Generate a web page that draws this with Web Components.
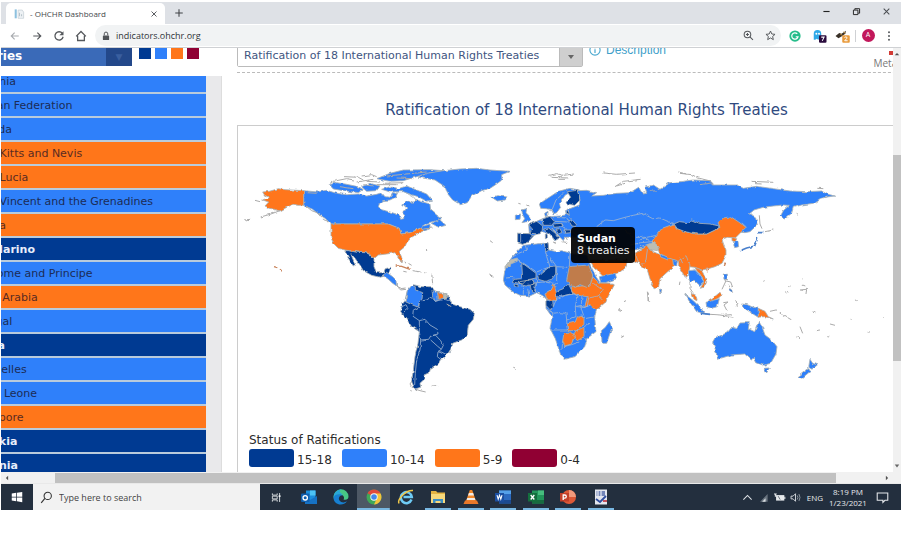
<!DOCTYPE html>
<html lang="en">
<head>
<meta charset="utf-8">
<title>OHCHR Dashboard</title>
<style>
  html, body { height: 100%; }
  body { margin: 0; background: #fff; overflow: hidden; font-family: "DejaVu Sans", Verdana, sans-serif; }
</style>
</head>
<body>
<desktop-screen>
  <tab-strip slot="browser"></tab-strip>
  <nav-toolbar slot="browser"></nav-toolbar>
  <scroll-frame slot="browser">
    <country-list></country-list>
    <treaty-report></treaty-report>
  </scroll-frame>
  <task-bar slot="taskbar"></task-bar>
</desktop-screen>

<script>
const define = (name, html, setup) => {
  const template = document.createElement('template');
  template.innerHTML = html;
  customElements.define(name, class extends HTMLElement {
    constructor() {
      super();
      this.attachShadow({ mode: 'open' }).append(template.content.cloneNode(true));
      if (setup) setup(this);
    }
  });
};

const ICONS = {
  back: '<path d="M13 8H3M7.500 3.500L3 8l4.500 4.500" fill="none" stroke="#a9acb0" stroke-width="1.500"/>',
  forward: '<path d="M3 8h10M8.500 3.500L13 8l-4.500 4.500" fill="none" stroke="#55585c" stroke-width="1.600"/>',
  reload: '<path d="M12.500 4.500A5.500 5.500 0 1 0 13.500 9" fill="none" stroke="#55585c" stroke-width="1.700"/><path d="M14 1.500V7H8.500z" fill="#55585c"/>',
  home: '<path d="M1.500 8.500L8 2l6.500 6.500M3.500 7.500V14h9V7.500" fill="none" stroke="#55585c" stroke-width="1.700"/>',
  lock: '<rect x="3" y="7" width="10" height="7.500" rx="1" fill="#505357"/><path d="M5.200 7V4.500a2.800 2.800 0 0 1 5.600 0V7" fill="none" stroke="#505357" stroke-width="1.600"/>',
  zoom: '<circle cx="6.500" cy="6.500" r="4.800" fill="none" stroke="#55585c" stroke-width="1.500"/><path d="M10 10l4.500 4.500M4.300 6.500h4.400M6.500 4.300v4.400" stroke="#55585c" stroke-width="1.500"/>',
  star: '<path d="M8 1.500l1.900 4.300 4.700.5-3.500 3.100 1 4.600L8 11.600 3.900 14l1-4.600L1.400 6.300l4.700-.5z" fill="none" stroke="#55585c" stroke-width="1.400"/>',
  grammar: '<circle cx="8" cy="8" r="7.500" fill="#27bd8b"/><path d="M11 5.200A4.200 4.200 0 1 0 12 9H9" fill="none" stroke="#fff" stroke-width="1.600"/>',
  ghost: '<path d="M1 13V5a5 5 0 0 1 10 0v8l-2-1.500L7 13l-2-1.500L3 13z" fill="#30a9e8"/><circle cx="4.500" cy="5" r="1.300" fill="#fff"/><circle cx="8" cy="5" r="1.300" fill="#fff"/><rect x="8" y="7" width="10" height="10" rx="1.500" fill="#2a0b3d"/><path d="M11 9.500h3.800l-2.500 5" fill="none" stroke="#fff" stroke-width="1.400"/>',
  wasp: '<path d="M-2 8l5-4 3 1 6-4-1 4-4 3-5 3z" fill="#3a3128"/><path d="M4 5l3 2M9 2l2 3" stroke="#d39a3d" stroke-width="1.200"/><rect x="7" y="7" width="10" height="10" rx="1.500" fill="#e99b3c"/><path d="M10 10q2-1.800 3.400 0 .4 1-3.200 4.300h4" fill="none" stroke="#fff" stroke-width="1.300"/>',
  more: '<circle cx="8" cy="3" r="1.300" fill="#55585c"/><circle cx="8" cy="8" r="1.300" fill="#55585c"/><circle cx="8" cy="13" r="1.300" fill="#55585c"/>',
  close: '<path d="M3 3l10 10M13 3L3 13" stroke="#4a4d51" stroke-width="1.800"/>',
  plus: '<path d="M8 2v12M2 8h12" stroke="#3f4246" stroke-width="1.700"/>',
  min: '<path d="M2.500 8h11" stroke="#222" stroke-width="2"/>',
  restore: '<path d="M2.500 5.500h8v8h-8zM5 5V3h8.500v8H11" fill="none" stroke="#222" stroke-width="1.700"/>',
  page: '<path d="M1 2h3v13H1z" fill="#8dc1df"/><path d="M6 3h6l2 3v9H6z" fill="#eef2f5" stroke="#c2ccd3"/><path d="M8 12V7M11 12V9" stroke="#b6c2ca" stroke-width="1.500"/>',
  windows: '<path d="M1 3.300l6-.9v5.200H1zM8 2.300L15 1.200v6.400H8zM1 8.500h6v5.200l-6-.9zM8 8.500h7v6.400L8 13.800z" fill="#fff"/>',
  search: '<circle cx="9.500" cy="6" r="4.500" fill="none" stroke="#333" stroke-width="1.300"/><path d="M6 9l-4.500 5.500" stroke="#333" stroke-width="1.400"/>',
  tasks: '<path d="M2 2v2.500h7V2M2 14v-2.500h7V14M2 6h7v4H2zM12.500 1.500v13" fill="none" stroke="#d4d8dc" stroke-width="1.400"/><path d="M11 5h3v2h-3z" fill="#fff"/>',
  outlook: '<path d="M5 1.500h9.500V14H5z" fill="#1d8fdc"/><path d="M9 1.500h5.500v5H9z" fill="#4cc3f4"/><path d="M4 8l5 3 7-4v8H4z" fill="#1672c4"/><rect y="4.500" width="8.500" height="8.500" rx="1" fill="#0f5fb0"/><circle cx="4.200" cy="8.800" r="2.200" fill="none" stroke="#fff" stroke-width="1.300"/>',
  edge: '<path d="M.5 8A7.500 7.500 0 0 1 15.500 7.500c0 3-2.500 3.800-5 3 1.500-2-.3-5-3-4.800C4 5.900 1 8 1 10z" fill="#47c985"/><path d="M.5 8C1 3 5 .5 8.500.5 4 3 9 4 10 6 5 4 2 6 .5 8z" fill="#29a6db"/><path d="M.5 8.500C2 4.500 7 4.500 9.500 6.500 6.500 6 5 9 6.500 11.500c1.500 2.300 5 2.500 7.500.8C10 18 .5 16 .5 8.500z" fill="#1780d2"/>',
  chrome: '<circle cx="8" cy="8" r="7.500" fill="#3fa958"/><path d="M8 8L1.500 4.200A7.500 7.500 0 0 1 14.500 4.200z" fill="#e2483c"/><path d="M8 4.500h6.600A7.500 7.500 0 0 1 8 15.500L11 9z" fill="#f5c33b"/><circle cx="8" cy="8" r="3.700" fill="#f4f6f6"/><circle cx="8" cy="8" r="2.800" fill="#4486ed"/>',
  ie: '<path d="M13.500 10.500A5.500 5.500 0 1 1 13.800 8H5.500" fill="none" stroke="#6ecbf5" stroke-width="2.500"/><path d="M1 14.500C-1 11 7 1 15 1.500" fill="none" stroke="#efc94c" stroke-width="1.500"/>',
  folder: '<path d="M1 2h5l1.500 1.500H15V14H1z" fill="#e5b443"/><path d="M1 5h14v9H1z" fill="#f8d97b"/><path d="M3 14v-4h10v4h-2.500v-2h-5v2z" fill="#3e8fc4"/>',
  vlc: '<path d="M6.800 1h2.400L13 12H3z" fill="#f3892c"/><path d="M5.900 4h4.200l.9 2.600H5zM4.300 9h7.400l.7 2H3.600z" fill="#f2eee9"/><path d="M2 11.500h12l1.500 3.500H.5z" fill="#e8782a"/>',
  word: '<path d="M4 1.500h12v13H4z" fill="#2c6ac0"/><path d="M4 1.500h12v3.500H4z" fill="#55a0e8"/><path d="M4 11h12v3.500H4z" fill="#1b4a91"/><path d="M0 4h9v8.500H0z" fill="#1c4fa0"/><path d="M2 6.200l1.200 4 1.300-4 1.300 4 1.200-4" fill="none" stroke="#fff" stroke-width="1.100"/>',
  excel: '<path d="M4 1.500h12v13H4z" fill="#22955a"/><path d="M10 1.500h6V6h-6z" fill="#46bd7e"/><path d="M4 11h12v3.500H4z" fill="#176b40"/><path d="M0 4h9v8.500H0z" fill="#146f3e"/><path d="M2.700 6l3.600 4.500M6.300 6l-3.600 4.500" stroke="#fff" stroke-width="1.300"/>',
  ppt: '<circle cx="9" cy="8" r="7" fill="#dd5937"/><path d="M9 1a7 7 0 0 1 7 7H9z" fill="#f29a7c"/><path d="M0 4h9v8.500H0z" fill="#c2402a"/><path d="M3.200 11V6h1.500a1.600 1.600 0 0 1 0 3.200H3.200" fill="none" stroke="#fff" stroke-width="1.300"/>',
  app: '<path d="M2 .5h12v15H2z" fill="#e3e6ee"/><path d="M3.500 2H12v5H3.500z" fill="#7386b9"/><path d="M5 2v5M8 2v5" stroke="#fff"/><path d="M3 10l4 3 6-6" fill="none" stroke="#2e4d9e" stroke-width="1.800"/><path d="M10 12h4" stroke="#c3505c" stroke-width="2"/>',
  up: '<path d="M2 11l6-6 6 6" fill="none" stroke="#dce0e4" stroke-width="1.600"/>',
  wifi: '<path d="M3 14L14 3v11z" fill="#69747f"/><path d="M6 14l5-5v5z" fill="#dce0e4"/>',
  battery: '<path d="M0 3h4M2 3v4" stroke="#e6e9ec" stroke-width="1.600"/><path d="M3 4.500h12v8H3z" fill="#e6e9ec"/><path d="M15 7h1.500v3H15z" fill="#e6e9ec"/><path d="M6 6l3 5" stroke="#37424e"/>',
  sound: '<path d="M1.500 6h3L8 2.500v11L4.500 10h-3z" fill="none" stroke="#dce0e4" stroke-width="1.300"/><path d="M10.500 5q2 3 0 6M13 3q3 5 0 10" fill="none" stroke="#97a0a9" stroke-width="1.300"/>',
  note: '<path d="M1.500 2.500h13v9H11L8.500 14 8.500 11.500h-7z" fill="none" stroke="#e6e9ec" stroke-width="1.300"/>',
  info: '<circle cx="8" cy="8" r="6.800" fill="none" stroke="#4aa8cf" stroke-width="1.500"/><path d="M8 7v5M8 3.500v2" stroke="#4aa8cf" stroke-width="1.600"/>',
  down: '<path d="M2 4h12L8 12z" fill="#666"/>',
  left: '<path d="M11 2v12L5 8z" fill="#505050"/>',
  right: '<path d="M5 2v12l6-6z" fill="#505050"/>',
  top: '<path d="M2 11h12L8 5z" fill="#505050"/>'
};

class UiIcon extends HTMLElement {
  constructor() { super(); this.attachShadow({ mode: 'open' }); }
  connectedCallback() {
    this.shadowRoot.innerHTML = `<style>
      :host { display: inline-flex; width: var(--icon, 11px); height: var(--icon, 11px); flex: none; }
      svg { width: 100%; height: 100%; overflow: visible; }
    </style><svg viewBox="0 0 16 16" aria-hidden="true">${ICONS[this.getAttribute('name')]}</svg>`;
  }
}
customElements.define('ui-icon', UiIcon);

const BUTTON = `button { border: 0; padding: 0; margin: 0; background: none; display: flex; align-items: center; justify-content: center; font: inherit; color: inherit; }`;

define('desktop-screen', `<style>
  :host { display: flex; flex-direction: column; box-sizing: border-box; height: 100vh; padding: 2px 0 27px 1px; }
  main { flex: 1; min-height: 0; display: flex; flex-direction: column; }
</style><main><slot name="browser"></slot></main><slot name="taskbar"></slot>`);

define('tab-strip', `<style>
  :host { display: flex; flex: none; height: 22px; background: #dee1e6; padding-left: 5px; font: 8px "Open Sans", sans-serif; color: #45484c; }
  ${BUTTON}
  .tab { display: flex; align-items: center; box-sizing: border-box; width: 159px; padding: 0 4px 0 8px; margin-top: 1px; background: #fff; border-radius: 5px 5px 0 0; }
  .tab span { flex: 1; padding-left: 5px; }
  .tab button { width: 14px; --icon: 8px; }
  .add { width: 28px; --icon: 10px; }
  .win { margin-left: auto; display: flex; --icon: 9px; }
  .win button { width: 30px; height: 19px; }
</style>
<div class="tab"><ui-icon name="page"></ui-icon><span>- OHCHR Dashboard</span><button aria-label="Close tab"><ui-icon name="close"></ui-icon></button></div>
<button class="add" aria-label="New tab"><ui-icon name="plus"></ui-icon></button>
<div class="win"><button aria-label="Minimize"><ui-icon name="min"></ui-icon></button><button aria-label="Restore"><ui-icon name="restore"></ui-icon></button><button aria-label="Close"><ui-icon name="close"></ui-icon></button></div>`);

define('nav-toolbar', `<style>
  :host { display: flex; flex: none; align-items: center; box-sizing: border-box; height: 24px; padding: 0 3px; background: #fff; border-bottom: 1px solid #cfd1d4; }
  ${BUTTON}
  button { width: 22px; height: 22px; --icon: 12px; }
  .ext { width: 24px; }
  form { flex: 1; display: flex; align-items: center; height: 21px; margin: 0 2px 0 3px; padding-left: 6px; background: #f1f3f4; border-radius: 11px; }
  form button { --icon: 11px; }
  form ui-icon[name=lock] { --icon: 10px; }
  input { flex: 1; min-width: 0; border: 0; background: none; padding: 0 0 0 5px; outline: 0; font: 9px "Open Sans", sans-serif; color: #303338; }
  i { width: 1px; height: 12px; background: #cfd1d4; }
  b { width: 13px; height: 13px; border-radius: 50%; background: #c2185b; color: #fff; font: 7px/13px Roboto, sans-serif; text-align: center; }
  .more { width: 18px; }
</style>
<button aria-label="Back"><ui-icon name="back"></ui-icon></button>
<button aria-label="Forward"><ui-icon name="forward"></ui-icon></button>
<button aria-label="Reload"><ui-icon name="reload"></ui-icon></button>
<button aria-label="Home"><ui-icon name="home"></ui-icon></button>
<form><ui-icon name="lock"></ui-icon><input aria-label="Address" value="indicators.ohchr.org"><button type="button" aria-label="Zoom"><ui-icon name="zoom"></ui-icon></button><button type="button" aria-label="Bookmark"><ui-icon name="star"></ui-icon></button></form>
<button class="ext" aria-label="Grammar extension"><ui-icon name="grammar"></ui-icon></button>
<button class="ext" aria-label="Privacy extension"><ui-icon name="ghost"></ui-icon></button>
<button class="ext" aria-label="Tracker extension"><ui-icon name="wasp"></ui-icon></button>
<i></i><button class="ext" aria-label="Profile"><b>A</b></button>
<button class="more" aria-label="Menu"><ui-icon name="more"></ui-icon></button>`);

define('scroll-frame', `<style>
  :host { flex: 1; min-height: 0; display: grid; grid-template: minmax(0, 1fr) 11px / minmax(0, 1fr) 8px; background: #f1f1f1; --icon: 6px; }
  .view { display: flex; overflow: hidden; background: #fff; }
  .v, .h { display: flex; align-items: center; justify-content: space-between; }
  .v { flex-direction: column; padding: 3px 0; }
  .h { padding: 0 3px; }
  .h div { flex: 1; height: 10px; padding: 0 48px 0 45px; }
  .v div { flex: 1; width: 8px; padding: 98px 0 102px; }
  span { display: block; height: 100%; background: #c1c1c1; }
</style>
<div class="view"><slot></slot></div>
<div class="v"><ui-icon name="top"></ui-icon><div><span></span></div><ui-icon name="down"></ui-icon></div>
<div class="h"><ui-icon name="left"></ui-icon><div><span></span></div><ui-icon name="right"></ui-icon></div>`);

define('country-list', `<style>
  :host { flex: none; width: 221px; display: flex; flex-direction: column; overflow: hidden; font-size: 11px; }
  header { display: flex; height: 28px; box-sizing: border-box; align-items: flex-start; }
  ${BUTTON}
  button.pick { width: 131px; height: 18px; background: #3a6ab8; justify-content: space-between; overflow: hidden; color: #fff; font: bold 12px "DejaVu Sans", sans-serif; }
  .pick span { margin-left: -44px; padding-bottom: 3px; }
  .pick em { width: 26px; height: 18px; background: #23488a; display: flex; align-items: center; justify-content: center; font: 9px/18px "DejaVu Sans", sans-serif; color: #3a5f9f; }
  .keys { display: flex; gap: 4px; padding-left: 7px; }
  .keys i { width: 12px; height: 11px; }
  .list { flex: 1; min-height: 0; overflow: hidden; background: #e9e9eb; border-right: 1px solid #ddd; }
  ul { list-style: none; margin: -6px 15px 0 0; padding: 0; }
  li { height: 22px; line-height: 23px; border-bottom: 2px solid #b9cbdc; white-space: nowrap; overflow: hidden; color: #1c2c56; }
  li span { margin-left: -33px; }
  .m { background: #2f80fa; } .o { background: #ff761a; color: #5a2b22; } .d { background: #003a92; color: #e8eefb; font-weight: bold; }
  .d span { margin-left: -36px; }
</style>
<header><button class="pick"><span>Countries</span><em>▼</em></button><div class="keys"><i style="background:#003a92"></i><i style="background:#2f80fa"></i><i style="background:#ff761a"></i><i style="background:#900033"></i></div></header>
<div class="list"><ul></ul></div>`, host => {
  const rows = 'm Romania|m Russian Federation|m Rwanda|o Saint Kitts and Nevis|o Saint Lucia|m Saint Vincent and the Grenadines|o Samoa|d San Marino|m Sao Tome and Principe|o Saudi Arabia|m Senegal|d Serbia|m Seychelles|m Sierra Leone|o Singapore|d Slovakia|d Slovenia';
  host.shadowRoot.querySelector('ul').innerHTML = rows.split('|').map(r => `<li class="${r[0]}"><span>${r.slice(2)}</span></li>`).join('');
});

define('treaty-report', `<style>
  :host { flex: 1; min-width: 0; display: flex; flex-direction: column; margin: 0 -43px 0 15px; color: #333; font-size: 11px; }
  header { flex: none; display: flex; align-items: flex-start; height: 24px; border-bottom: 1px dashed #bbb; }
  .combo { display: flex; width: 346px; height: 26px; box-sizing: border-box; margin-top: -7px; border: 1px solid #bbb; border-radius: 2px; }
  select { flex: 1; appearance: none; border: 0; padding: 3px 0 0 6px; background: #fff; font: 11px "DejaVu Sans", sans-serif; color: #41557f; outline: 0; }
  .combo span { width: 22px; display: flex; align-items: center; justify-content: center; padding-top: 5px; background: #cfcfcf; border-left: 1px solid #bbb; --icon: 8px; }
  a { display: flex; align-items: center; gap: 5px; margin: -5px 0 0 6px; font: 12px/14px "Liberation Sans", Arial, sans-serif; color: #3f9fca; text-decoration: none; --icon: 12px; }
  .meta { margin: 0 18px 0 auto; display: flex; flex-direction: column; align-items: flex-start; font: 10px/12px "Open Sans", sans-serif; color: #777; }
  .meta i { width: 4px; height: 4px; margin: 3px 0 2px 16px; background: #d23b35; }
  h1 { flex: none; margin: 0; padding: 27px 0 5px; font: 15px/20px "DejaVu Sans", sans-serif; text-align: center; color: #2f4a80; }
  section { flex: 1; min-height: 0; display: flex; flex-direction: column; border: 1px solid #ccc; border-bottom: 0; }
</style>
<header>
  <div class="combo"><select aria-label="Indicator"><option>Ratification of 18 International Human Rights Treaties</option></select><span><ui-icon name="down"></ui-icon></span></div>
  <a href="#description"><ui-icon name="info"></ui-icon>Description</a>
  <div class="meta"><i></i>Metadata</div>
</header>
<h1>Ratification of 18 International Human Rights Treaties</h1>
<section><world-map><map-tip><b>Sudan</b>8 treaties</map-tip></world-map><map-legend></map-legend></section>`);

define('map-tip', `<style>
  :host { display: block; box-sizing: border-box; padding: 6px; border-radius: 4px; background: rgba(0,0,0,.93); color: #eee; font: 11px/12px "DejaVu Sans", sans-serif; white-space: nowrap; }
  ::slotted(b) { display: block; color: #fff; }
</style><slot></slot>`);

define('map-legend', `<style>
  :host { display: block; flex: none; padding: 0 0 5px 11px; font: 12px/16px "DejaVu Sans", sans-serif; color: #2b2b2b; }
  ul { display: flex; gap: 10px; list-style: none; margin: 1px 0 0; padding: 0; }
  li { display: flex; gap: 3px; align-items: flex-end; line-height: 13px; }
  i { width: 45px; height: 18px; border-radius: 3px; }
</style>Status of Ratifications
<ul><li><i style="background:#003a92"></i>15-18</li><li><i style="background:#2f80fa"></i>10-14</li><li><i style="background:#ff761a"></i>5-9</li><li><i style="background:#900033"></i>0-4</li></ul>`);

define('world-map', `<style>
  :host { position: relative; display: block; flex: 1; min-height: 0; overflow: hidden; }
  svg { display: block; width: 100%; height: 100%; }
  ::slotted(map-tip) { position: absolute; left: 333px; top: 101px; }
  path { stroke: #aab2b6; stroke-width: 2.500; stroke-linejoin: round; }
  .b { fill: #2f80fa; } .o { fill: #ff761a; } .d { fill: #003a92; } .w { fill: #fff; } .g { fill: #bdbdb2; } .s { fill: #c07b4b; }
  .l { fill: none; stroke: #9db4d0; stroke-width: 2.500; } .k { fill: none; stroke: #aaa; stroke-width: 3; }
  .ol { fill: none; stroke: #c9845c; stroke-width: 4; } .bl { fill: none; stroke: #4a80cc; stroke-width: 5; }
</style>
<svg viewBox="238 126 698 306" preserveAspectRatio="xMinYMin slice" role="img" aria-label="World map of treaty ratification">
<defs><filter id="coast" x="0" y="0" width="1" height="1"><feTurbulence type="fractalNoise" baseFrequency=".2" numOctaves="2" seed="4"/><feDisplacementMap in="SourceGraphic" scale="3" xChannelSelector="R" yChannelSelector="G"/></filter></defs>
<g filter="url(#coast)"><path d="M238 126h698v306H238z" fill="#fff" style="stroke:none"/>
<!-- North America and Greenland -->
<g transform="translate(230 150) scale(.3333)">
<path class="b" d="M221 122L262 126 290 121 320 130 350 134 385 132 410 138 440 133 455 128 465 140 480 142 490 128 505 132 560 150 575 155 600 162 602 180 620 195 636 206 612 214 590 220 575 230 600 222 600 236 578 245 575 232 560 240 540 248 513 252 508 235 490 228 475 222 303 222 285 205 262 190 248 178 221 166Z"/>
<path class="w" d="M446 166L455 152 480 150 496 142 505 125 520 122 530 130 550 140 558 150 550 160 530 152 518 162 530 174 522 186 521 206 512 208 508 195 480 186 455 179Z"/>
<path class="b" d="M298 104L320 98 345 102 375 108 400 118 385 128 340 122 310 117ZM455 118L480 110 505 116 530 108 560 120 590 132 606 150 590 154 565 140 545 134 520 125 480 126ZM440 86L480 70 520 60 600 59 640 62 590 72 560 80 520 92 480 94ZM395 110L420 100 450 108 440 122 410 124ZM604 220L628 208 648 226 626 232Z"/>
<path class="k" d="M320 92L350 86 372 90M345 80L385 82 400 90M395 78L425 74 440 80M410 94L450 96M470 78L530 72 590 66M460 100L520 98M500 84L550 86M330 110L370 116M300 100L320 88M380 96L430 88M400 104L430 108M440 104L500 104M230 128L260 130M575 238L608 234"/>
<path class="o" d="M98 126L118 124 145 116 165 119 221 122 221 166 205 166 190 163 172 171 150 183 138 180 118 174 105 168 116 156 98 150 118 142 104 136Z"/>
<path class="k" d="M150 182L120 193 92 201M62 208L42 210M75 151L90 155M228 168L245 182 262 188 275 204 292 216"/>
<path class="o" d="M303 222L475 222 490 228 508 235 513 252 540 248 560 240 575 232 578 242 560 252 545 262 530 278 525 290 508 304 516 325 513 336 503 318 495 308 470 312 445 315 432 326 418 312 405 308 380 306 345 300 325 295 310 280 303 262Z"/>
<path class="d" d="M345 302L358 302 380 307 405 308 418 313 432 328 432 350 440 368 460 368 466 356 482 352 478 368 465 378 450 382 425 376 400 362 390 345 375 325 362 310 376 346 370 348 355 325Z"/>
<path class="b" d="M458 376L470 367 488 380 498 390 500 408 488 400 475 388Z"/>
<path class="ol" d="M497 348L515 349 540 358M132 350L142 353M150 358L156 364"/>
<path class="k" d="M520 330L530 342M535 340L545 346M548 362L572 366M520 364L530 366M580 368L586 368M605 372L608 400M500 408L515 416 530 414M588 300L592 303"/>
<path class="b" d="M565 82L590 70 640 62 690 57 740 55 780 60 840 64 815 74 816 90 800 102 782 114 755 122 725 138 712 158 692 164 668 150 652 130 645 110 615 90Z"/>
</g>
<!-- South America -->
<g transform="translate(380 260) scale(.3333)">
<path class="d" d="M82 92L100 74 125 80 158 80 164 96 203 102 210 120 215 132 240 140 270 148 283 160 280 178 265 196 262 225 245 240 218 250 212 268 195 294 182 298 175 312 152 325 148 338 132 345 136 355 120 370 122 382 105 387 95 365 100 330 105 290 114 250 118 215 95 200 78 175 62 155 68 132 75 122 80 100Z"/>
<path class="b" d="M82 92L96 76 106 80 106 90 128 98 126 118 118 125 115 142 98 135 76 125ZM156 90L172 100 175 120 166 124 158 108Z"/>
<path class="o" d="M173 100L192 100 190 116 177 118Z"/><path class="g" d="M192 98L206 106 198 118 190 116Z"/>
<path class="l" d="M128 122L142 120 152 108 166 124 190 118 205 120 214 130M118 125L116 142 100 150 98 168 118 182 118 215M118 182L135 178 150 195 172 208 174 222 152 228 146 238 122 240 118 215M154 228L166 225 182 242 190 256 184 268 172 258 152 240M122 240L120 270 110 300 106 340 104 375M184 268L174 276 172 290 182 298M176 272L200 284M66 140L78 134 84 146 72 156"/>
<path class="k" d="M92 390L94 394M108 388L120 392 137 396M158 378L174 380M94 350L98 360 90 372 98 384M50 78L62 90 78 88M200 132L214 140M328 42L340 50"/>
</g>
<!-- Europe and Africa -->
<g transform="translate(490 150) scale(.3333)">
<path class="b" d="M5 142L20 137 52 141 46 150 22 153ZM95 180L110 176 108 188 122 202 124 212 96 218 104 206 98 194ZM76 196L92 192 90 208 76 209Z"/>
<path class="k" d="M175 76L200 71 220 76 252 72M182 82L235 84M205 88L225 88M340 69L380 73 435 69M375 110L400 94 452 88M380 108L405 100M85 160L92 162M112 165L118 168M0 272L8 278M0 375L10 382M472 425L476 455M385 478L396 482M390 562L402 558M70 652L78 655M402 455L408 452"/>
<path class="b" d="M148 162L165 150 185 137 205 124 240 115 268 120 238 128 225 136 216 150 208 160 212 172 200 188 190 192 182 178 168 176 152 175ZM164 190L174 184 174 198 166 200Z"/>
<path class="b" d="M116 224L140 214 158 206 175 200 210 198 230 194 226 182 240 176 272 170 330 200 330 260 225 262 220 272 210 262 196 244 186 236 200 252 206 266 194 272 178 250 160 246 132 256 114 276 98 283 83 278 84 250 118 251Z"/>
<path class="d" d="M232 125L262 121 270 150 254 166 232 162 228 154 242 142ZM83 250L118 251 131 257 114 276 98 283 83 278ZM116 224L140 214 158 228 156 246 148 252 118 250 126 236ZM156 208L180 199 192 214 182 226 160 226ZM160 238L176 234 196 250 206 264 196 272 180 252ZM236 212L255 208 300 214 314 226 290 234 246 228ZM190 222L215 220 218 230 192 232ZM198 238L210 236 216 248 206 250ZM222 240L242 240 242 248 224 250ZM228 186L246 184 246 192 230 194ZM166 252L172 252 172 266 166 266Z"/>
<path class="l" d="M190 202L232 204 236 212M192 214L234 216M245 192L262 190 270 204M262 190L290 205M92 252L92 278M215 220L225 236 222 250M186 180L198 150 220 130M150 214L158 206"/>
<path class="k" d="M218 275L232 278M186 276L198 280M228 262L232 270"/>
<path class="b" d="M86 300L100 286 160 280 174 278 176 300 200 305 215 302 250 312 290 315 302 348 318 380 330 398 370 400 372 406 340 460 320 480 314 500 318 545 292 565 284 590 255 620 222 628 214 620 196 566 180 535 186 500 168 475 168 455 172 450 160 438 140 428 120 438 90 436 68 425 45 405 40 390 44 365 50 345 66 322Z"/>
<path class="g" d="M42 354L60 330 82 324 82 334 62 342 60 352Z"/>
<path class="d" d="M95 338L138 370 138 384 110 390 98 402 68 396 72 388 98 386ZM143 378L180 350 197 348 197 372 185 388 165 394 145 388ZM84 396L130 388 132 402 108 408 92 404ZM120 406L136 398 134 426 126 428ZM198 425L220 416 235 402 250 430 226 436 200 441ZM168 455L188 450 190 470 180 479 168 466ZM163 280L174 278 176 300 168 306ZM72 402L84 404 84 412 74 410Z"/>
<path class="o" d="M165 432L184 420 192 402 198 422 202 452 170 449ZM244 412L300 405 308 380 328 399 370 400 372 406 345 458 320 479 300 464 284 472 292 440 262 436 248 428ZM230 522L256 516 262 500 282 504 282 524 270 532 258 542 234 542ZM222 548L244 546 256 556 244 582 224 588 218 572ZM258 542L282 532 282 560 262 572 248 558Z"/>
<path class="s" d="M238 350L296 345 308 375 302 400 290 412 270 404 256 412 240 406 230 390Z"/>
<path class="l" d="M66 322L86 310 110 300M82 328L96 338M48 384L70 382M110 300L106 286M80 326L140 366 180 350 170 320 166 304M178 320L200 350 232 352M200 350L200 400 192 404M240 310L238 350M138 386L140 398M136 426L140 398 160 396 190 400M100 408L100 434M112 408L116 436M200 450L226 436 252 432 264 438 256 470 258 500 230 510 228 490 208 488 186 490M186 500L190 490 168 476M190 470L198 450M230 510L232 540 180 540M218 572L216 600M282 500L272 470 284 472M260 470L284 472 300 466M272 496L284 506 316 500M282 530L300 520M282 560L290 575M222 590L245 584 268 576M292 470L296 444 325 438M345 458L325 438 340 422 310 400M256 470L274 466 276 438"/>
<path class="b" d="M334 542L346 532 358 515 366 532 350 580 336 580Z"/>
<path class="o" d="M300 330L412 330 408 352 390 366 370 374 340 380 330 370 312 354ZM432 312L480 284 480 330 465 350 432 332Z"/>
<path class="b" d="M328 380L376 370 380 386 346 398 332 398Z"/>
</g>
<!-- Asia and Oceania -->
<g transform="translate(640 150) scale(.3333)">
<path class="b" d="M-186 122L-160 121-130 128-145 138-110 136-70 130-30 128-4 112 8 132 20 130 16 112 40 105 60 118 90 98 120 95 160 90 215 92 220 105 290 105 310 115 350 109 400 116 450 123 500 125 545 123 560 132 586 138 560 141 540 146 520 160 485 165 460 172 455 190 432 208 422 198 430 182 448 166 430 165 400 168 370 172 342 180 328 192 346 200 352 225 330 245 315 248 250 240 60 250 30 290-15 300-150 300-205 240-190 225-212 200-215 178-182 165-180 150Z"/>
<path class="k" d="M120 70L155 74 175 84 215 94M115 66L140 72M335 94L400 97M345 101L365 102M535 115L550 116M470 190L476 194M180 104L220 98M10 126L50 122"/>
<path class="l" d="M102 222L60 204 38 206 8 190-20 196-45 202-80 212-105 210-130 230M0 270L20 262 50 256M-30 285L5 278 35 275M-15 262L15 262 28 272M0 290L30 282M-20 262L-45 240M305 218L320 232"/>
<path class="o" d="M102 222L110 235 135 245 170 252 200 252 225 240 240 232 234 218 250 204 272 200 296 216 318 232 300 250 286 264 262 262 246 268 250 280 258 300 258 316 246 340 225 350 205 356 185 360 165 352 145 350 118 335 85 325 60 312 50 290 35 275 50 255 66 235Z"/>
<path class="d" d="M102 222L118 215 145 218 155 210 178 220 210 222 238 228 225 240 200 252 170 252 135 245 112 236Z"/>
<path class="o" d="M-15 310L28 284 40 305 62 315 98 328 114 334 100 352 82 366 60 386 56 410 45 418 33 396 22 360 8 352-5 336Z"/>
<path class="g" d="M20 284L42 277 58 292 52 302 28 298Z"/>
<path class="b" d="M62 312L88 324 84 330 62 321ZM98 328L112 332 110 350 100 344ZM58 414L67 424 60 432Z"/>
<path class="o" d="M116 332L138 317 150 345 146 370 136 382 126 366 116 348ZM164 352L185 360 200 394 190 412 181 415 192 396 178 374ZM155 430L168 436 172 453 162 448ZM206 450L224 440 240 427 246 434 236 444 212 456ZM276 262L290 266 286 276 276 272Z"/>
<path class="b" d="M145 362L166 360 186 384 192 396 181 408 162 390 152 400 147 386ZM134 432L160 452 184 476 194 490 170 485 152 460ZM198 457L238 446 232 470 214 475 200 470ZM280 276L294 274 296 290 284 293ZM305 462L322 464 335 470 355 475 355 502 336 490 312 474ZM250 372L262 372 262 390 252 388Z"/>
<path class="l" d="M22 300L18 330 6 344M160 356L178 374 190 392M120 322L128 340"/>
<path class="k" d="M150 400L150 415 160 430M120 395L118 405M195 492L240 495 282 502M250 496L275 494M250 458L264 456 252 465 262 484M288 450L292 470M254 392L272 396 278 412M264 402L278 428M262 384L246 418M390 484L408 480M418 488L455 510M480 530L488 550M470 560L480 566M528 542L540 540M570 522L585 526M520 486L526 488M562 560L568 561M686 544L690 547M632 508L636 511M645 450L650 452M730 500L734 502M370 394L374 392M435 425L442 430M448 410L452 408M485 386L488 390M480 420L500 418 498 432M488 405L496 408M25 428L24 455M358 196L360 222 366 236M400 240L375 245"/>
<path class="ol" d="M257 338L253 348M200 358L203 364"/>
<path class="bl" d="M300 302L320 294 344 288 353 264M354 248L370 248M268 418L276 424M185 490L210 493"/>
<path class="o" d="M355 475L375 484 385 500 400 507 374 500 355 502Z"/>
<path class="b" d="M218 576L225 564 262 548 275 532 290 536 300 519 328 518 325 536 344 545 356 514 366 530 375 555 395 570 411 590 408 612 392 640 370 646 350 638 342 622 334 630 314 612 275 615 232 628 228 604ZM371 655L388 654 380 669ZM510 628L518 640 532 645 516 658 506 652ZM506 656L511 664 486 685 474 680Z"/>
</g></g></svg><slot></slot>`);

define('task-bar', `<style>
  :host { display: flex; flex: none; height: 26px; background: #232f3e; color: #e6e9ec; font: 8px/11px "Open Sans", sans-serif; border-top: 1px solid #e9e9e9; }
  ${BUTTON}
  .start { width: 32px; --icon: 12px; }
  label { display: flex; align-items: center; gap: 6px; width: 227px; box-sizing: border-box; padding-left: 7px; background: #f2f2f2; --icon: 13px; }
  input { flex: 1; min-width: 0; padding: 0; border: 0; outline: 0; background: none; font: 9px "Open Sans", sans-serif; }
  input::placeholder { color: #444; opacity: 1; }
  nav { display: flex; flex: 0 1 357px; --icon: 16px; }
  nav button { flex: 1; min-width: 0; }
  nav button:first-child { --icon: 11px; }
  nav .run { background: linear-gradient(#79b8e2, #79b8e2) bottom / 26px 2px no-repeat; }
  nav .on { background: linear-gradient(#79b8e2, #79b8e2) bottom / 100% 2px no-repeat #4d5865; }
  .tray { display: flex; align-items: center; margin-left: auto; padding-right: 6px; --icon: 11px; }
  .tray button { width: 16px; height: 26px; }
  .tray .lang { width: 24px; } .tray .clock { width: 42px; text-align: center; } .tray .note { width: 26px; --icon: 13px; }
</style>
<button class="start" aria-label="Start"><ui-icon name="windows"></ui-icon></button>
<label><ui-icon name="search"></ui-icon><input aria-label="Search" placeholder="Type here to search"></label>
<nav></nav>
<div class="tray"><button aria-label="Show hidden icons"><ui-icon name="up"></ui-icon></button><button aria-label="Network"><ui-icon name="wifi"></ui-icon></button><button aria-label="Battery"><ui-icon name="battery"></ui-icon></button><button aria-label="Volume"><ui-icon name="sound"></ui-icon></button><button class="lang">ENG</button><button class="clock">8:19 PM<br>1/23/2021</button><button class="note" aria-label="Notifications"><ui-icon name="note"></ui-icon></button></div>`, host => {
  const apps = [['tasks', ''], ['outlook', ''], ['edge', ''], ['chrome', 'run on'], ['ie', ''], ['folder', 'run'], ['vlc', 'run'], ['word', 'run'], ['excel', 'run'], ['ppt', 'run'], ['app', 'run']];
  host.shadowRoot.querySelector('nav').innerHTML = apps.map(([n, c]) => `<button class="${c}" aria-label="${n}"><ui-icon name="${n}"></ui-icon></button>`).join('');
});
</script>
</body>
</html>
